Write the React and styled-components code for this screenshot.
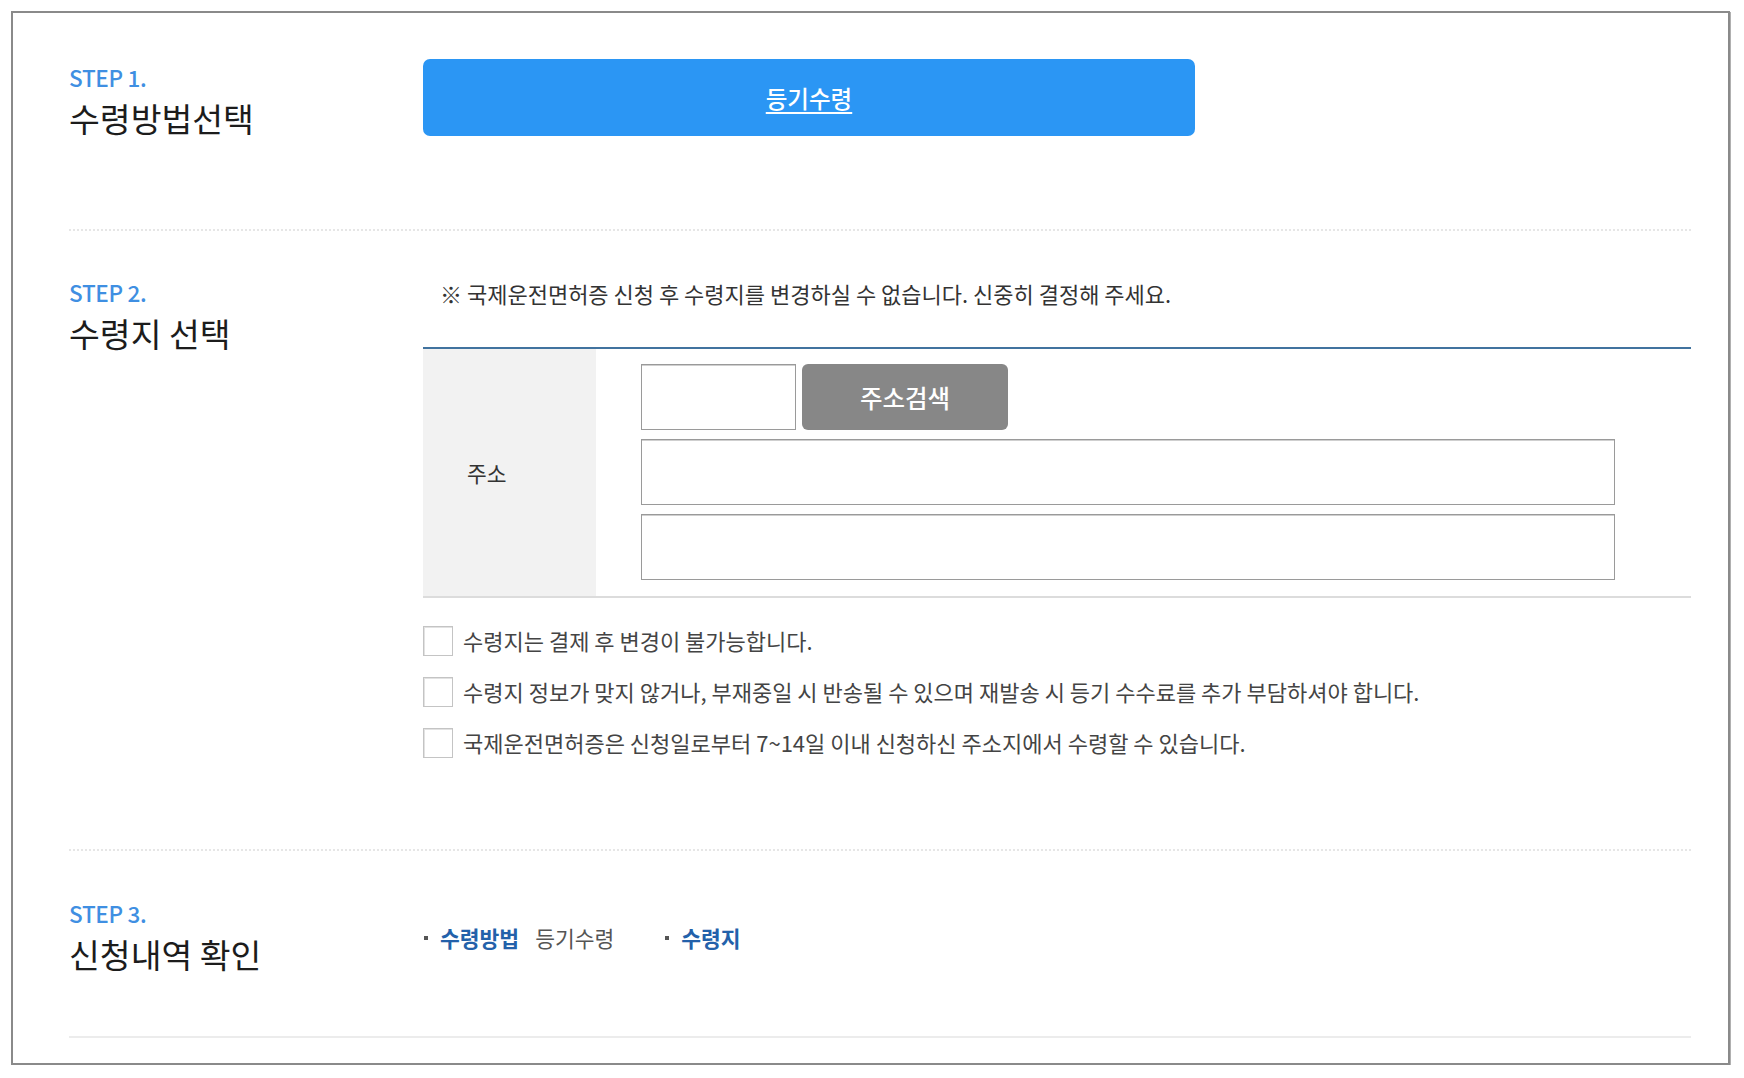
import React from "react";
import styled, { createGlobalStyle } from "styled-components";

const GlobalStyle = createGlobalStyle`
  html, body { margin: 0; padding: 0; background: #fff; }
  body { font-family: "Noto Sans CJK KR", "Noto Sans", sans-serif; color: #222; }
  * { box-sizing: border-box; }
`;

const Page = styled.div`
  padding: 11px 0 0 11px;
`;

const Frame = styled.div`
  width: 1719px;
  height: 1054px;
  border: 2px solid #8a8a8a;
  box-shadow: 1px 1px 0 #b0b0b0;
  background: #fff;
  padding: 0 37px 0 56px;
`;

const Section = styled.section`
  display: grid;
  grid-template-columns: 354px 1fr;
  padding: ${(p) => p.$pad};
  border-bottom: ${(p) => (p.$solid ? "2px solid #ececec" : "2px dotted #e6e6e6")};
`;

const StepCol = styled.div`
  padding-top: ${(p) => p.$offset || 0}px;
`;

const StepLabel = styled.div`
  font-size: 22.5px;
  line-height: 24px;
  font-weight: 500;
  color: #3f8fe2;
  letter-spacing: -0.3px;
`;

const StepTitle = styled.h2`
  margin: 9px 0 0;
  font-size: 33.5px;
  line-height: 40px;
  font-weight: 400;
  color: #1c1c1c;
  letter-spacing: 0;
`;

const Content = styled.div`
  padding-top: ${(p) => p.$offset || 0}px;
`;

const MethodButton = styled.button`
  width: 772px;
  height: 77px;
  border: none;
  border-radius: 7px;
  background: #2b96f4;
  color: #fff;
  font-family: inherit;
  font-size: 23.5px;
  font-weight: 500;
  text-decoration: underline;
  text-underline-offset: 4px;
  cursor: pointer;
`;

const Notice = styled.p`
  margin: 0 0 41px;
  padding-left: 17px;
  font-size: 22px;
  line-height: 26px;
  color: #333;
  letter-spacing: 0;
`;

const Table = styled.div`
  display: grid;
  grid-template-columns: 173px 1fr;
  border-top: 2px solid #41739f;
  border-bottom: 2px solid #dcdcdc;
`;

const LabelCell = styled.div`
  background: #f2f2f2;
  display: flex;
  align-items: center;
  padding-left: 44px;
  font-size: 21.5px;
  color: #333;
`;

const InputCell = styled.div`
  display: flex;
  flex-direction: column;
  gap: 9px;
  padding: 15px 0 16px 45px;
`;

const ZipRow = styled.div`
  display: flex;
  gap: 6px;
`;

const TextBox = styled.input`
  width: ${(p) => p.$w}px;
  height: 66px;
  border: 1px solid #9a9a9a;
  box-shadow: inset 0 1px 0 #cfcfcf;
  background: #fff;
  font-family: inherit;
  font-size: 18px;
  padding: 0 12px;
  outline: none;
`;

const SearchButton = styled.button`
  width: 206px;
  height: 66px;
  border: none;
  border-radius: 6px;
  background: #878787;
  color: #fff;
  font-family: inherit;
  font-size: 24.5px;
  font-weight: 500;
  cursor: pointer;
`;

const CheckList = styled.ul`
  list-style: none;
  margin: 28px 0 0;
  padding: 0;
  display: flex;
  flex-direction: column;
  gap: 21px;
`;

const CheckItem = styled.li`
  display: flex;
  align-items: center;
  gap: 10px;
  font-size: 22px;
  line-height: 30px;
  color: #444;
  letter-spacing: 0;
`;

const CheckText = styled.span`
  position: relative;
  top: -1px;
`;

const CheckBox = styled.span`
  width: 30px;
  height: 30px;
  border: 1px solid #c4c4c4;
  box-shadow: inset 1px 1px 0 #e2e2e2;
  background: #fff;
  flex: none;
`;

const Summary = styled.ul`
  list-style: none;
  margin: 0;
  padding: 0;
  display: flex;
  gap: 50px;
`;

const SummaryItem = styled.li`
  display: flex;
  align-items: center;
  font-size: 21.5px;
  line-height: 28px;
  letter-spacing: 0;
  &::before {
    content: "";
    width: 4px;
    height: 4px;
    background: #555;
    margin-right: 12px;
    margin-left: 1px;
  }
`;

const SummaryKey = styled.span`
  color: #2361aa;
  font-weight: 700;
  margin-right: 16px;
`;

const SummaryValue = styled.span`
  color: #555;
`;

const checks = [
  "수령지는 결제 후 변경이 불가능합니다.",
  "수령지 정보가 맞지 않거나, 부재중일 시 반송될 수 있으며 재발송 시 등기 수수료를 추가 부담하셔야 합니다.",
  "국제운전면허증은 신청일로부터 7~14일 이내 신청하신 주소지에서 수령할 수 있습니다.",
];

export default function App() {
  return (
    <>
      <GlobalStyle />
      <Page>
        <Frame>
          <Section $pad="46px 0 91px">
            <StepCol $offset={6}>
              <StepLabel>STEP 1.</StepLabel>
              <StepTitle>수령방법선택</StepTitle>
            </StepCol>
            <Content>
              <MethodButton type="button">등기수령</MethodButton>
            </Content>
          </Section>

          <Section $pad="49px 0 91px">
            <StepCol>
              <StepLabel>STEP 2.</StepLabel>
              <StepTitle>수령지 선택</StepTitle>
            </StepCol>
            <Content>
              <Notice>※ 국제운전면허증 신청 후 수령지를 변경하실 수 없습니다. 신중히 결정해 주세요.</Notice>
              <Table>
                <LabelCell>주소</LabelCell>
                <InputCell>
                  <ZipRow>
                    <TextBox $w={155} />
                    <SearchButton type="button">주소검색</SearchButton>
                  </ZipRow>
                  <TextBox $w={974} />
                  <TextBox $w={974} />
                </InputCell>
              </Table>
              <CheckList>
                {checks.map((t) => (
                  <CheckItem key={t}>
                    <CheckBox />
                    <CheckText>{t}</CheckText>
                  </CheckItem>
                ))}
              </CheckList>
            </Content>
          </Section>

          <Section $pad="50px 0 62px" $solid>
            <StepCol>
              <StepLabel>STEP 3.</StepLabel>
              <StepTitle>신청내역 확인</StepTitle>
            </StepCol>
            <Content $offset={23}>
              <Summary>
                <SummaryItem>
                  <SummaryKey>수령방법</SummaryKey>
                  <SummaryValue>등기수령</SummaryValue>
                </SummaryItem>
                <SummaryItem>
                  <SummaryKey>수령지</SummaryKey>
                </SummaryItem>
              </Summary>
            </Content>
          </Section>
        </Frame>
      </Page>
    </>
  );
}
